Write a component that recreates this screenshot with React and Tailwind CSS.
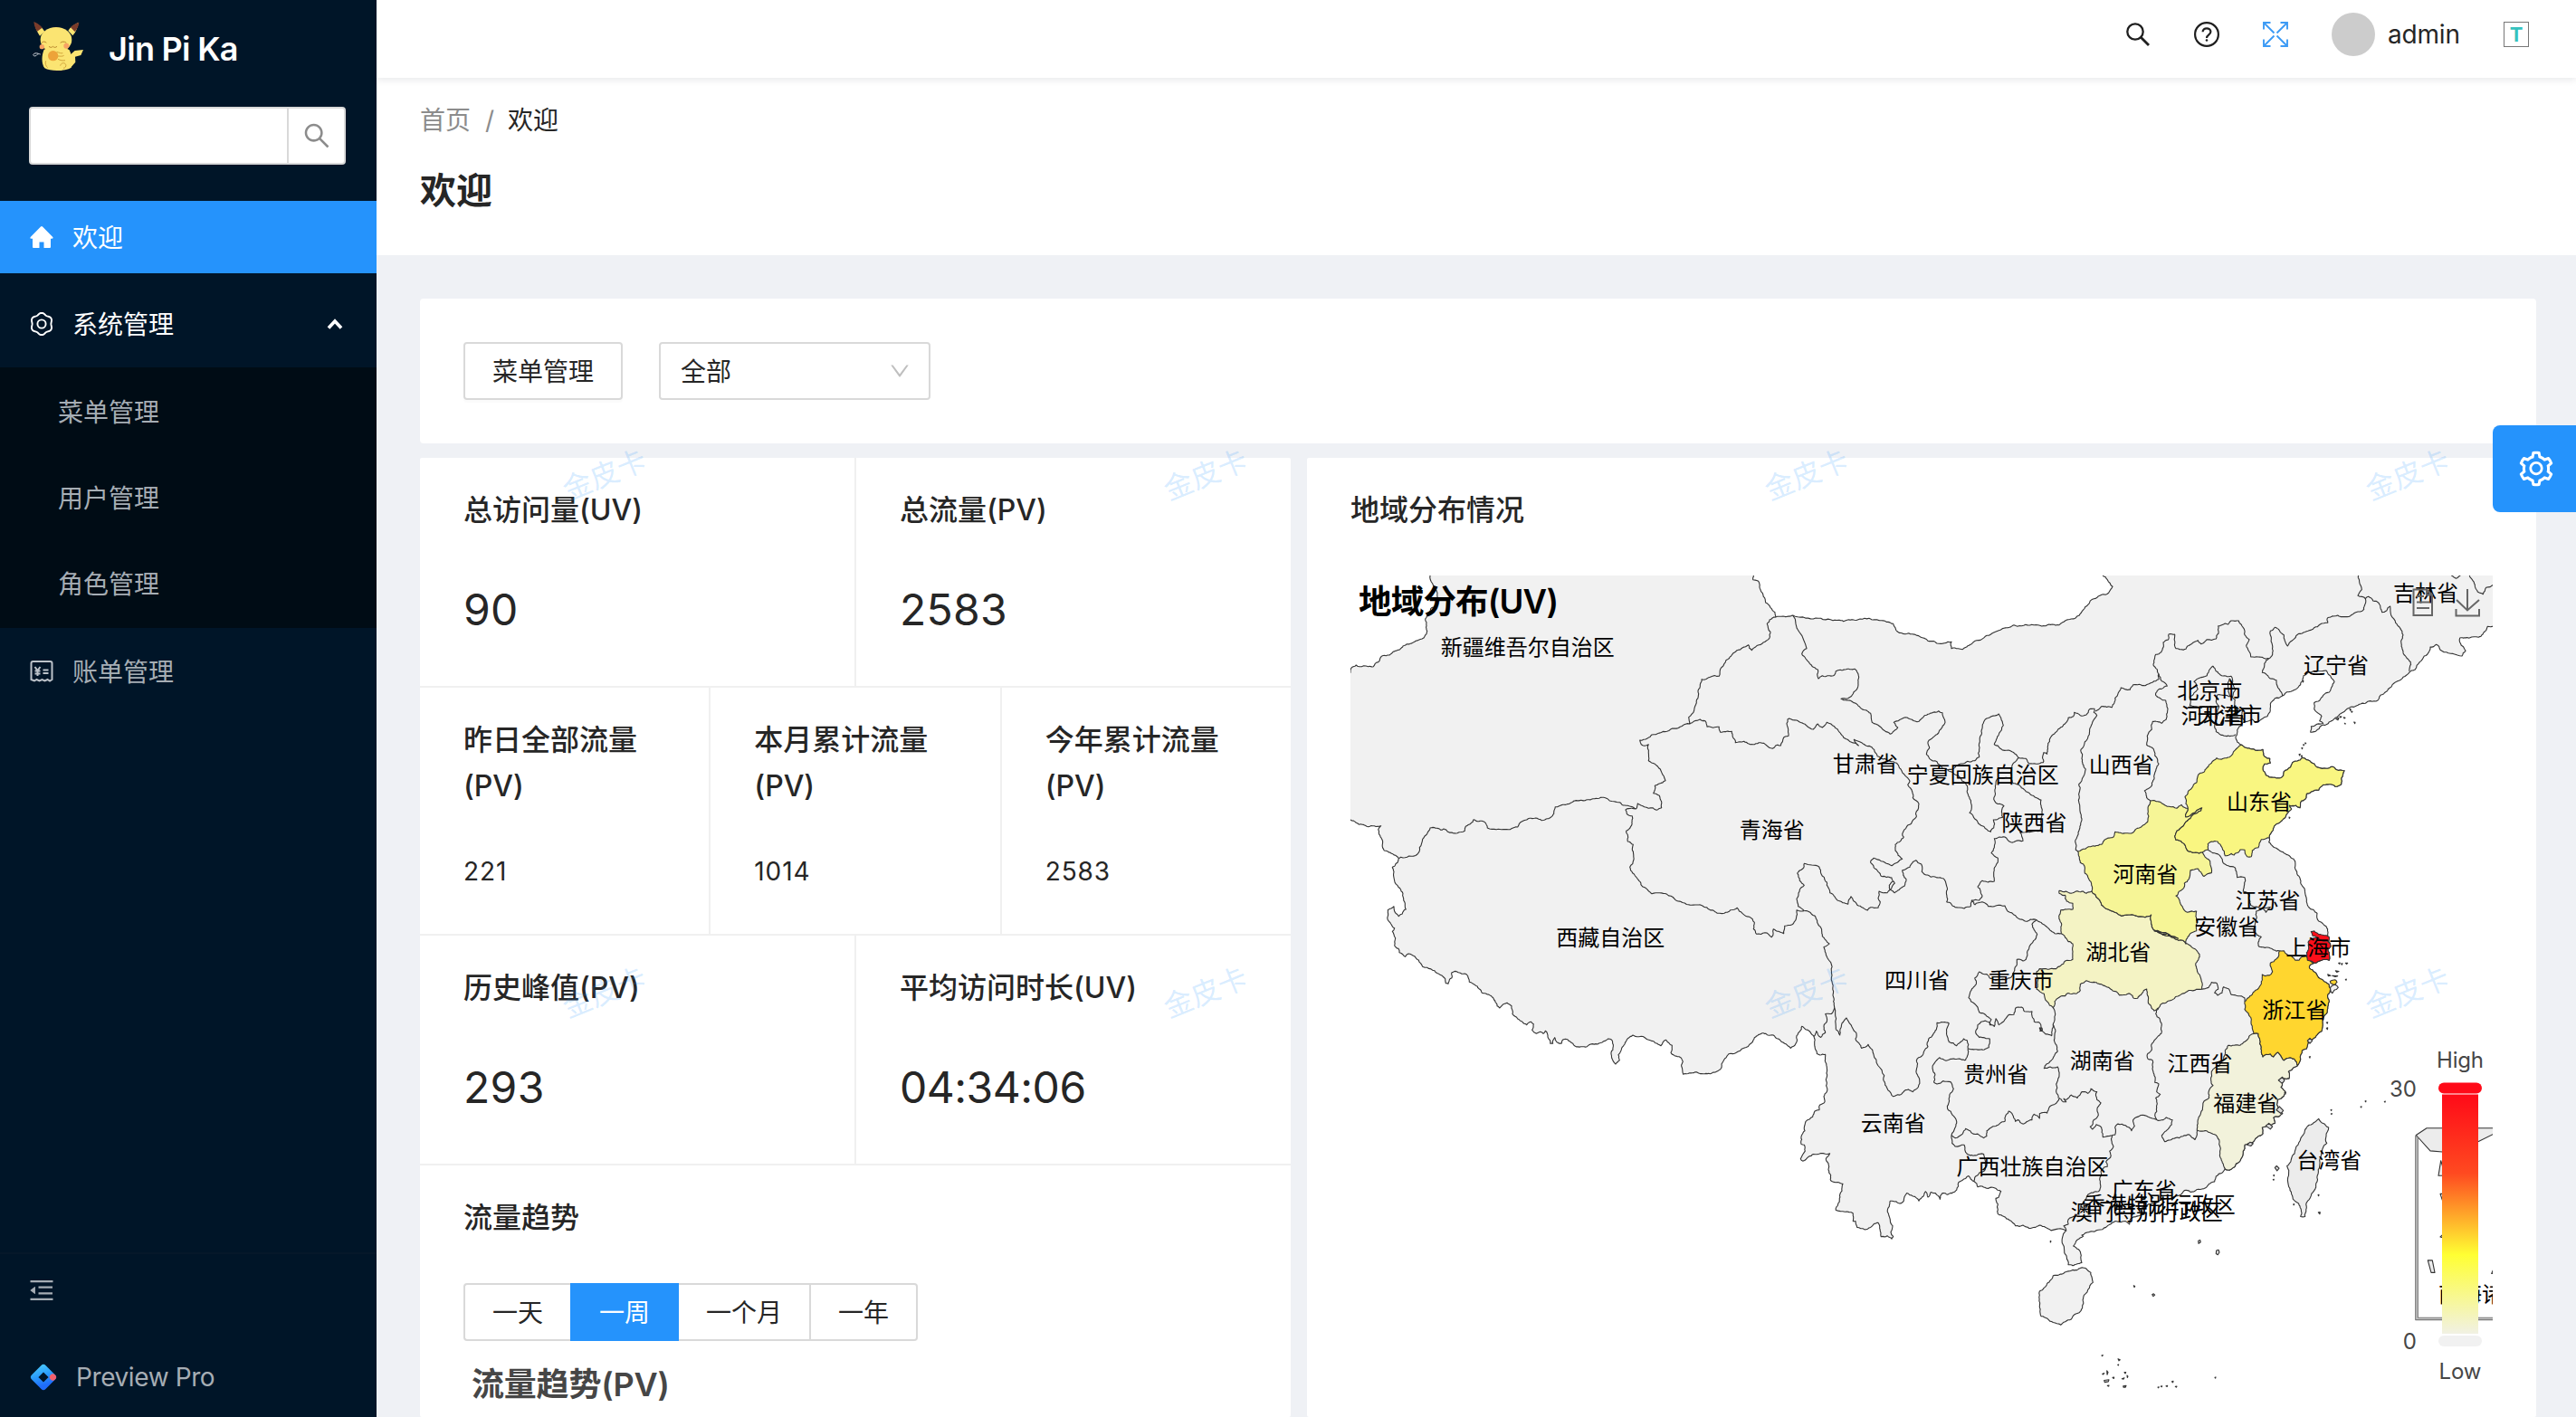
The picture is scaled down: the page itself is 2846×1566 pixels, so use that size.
import React from "react";
import { AiOutlineSearch, AiOutlineSetting, AiOutlineMenuFold, AiOutlineDown } from "react-icons/ai";

/* ---------- map geometry ---------- */

// Each sheet has its own local units: [origin x, origin y, units per px x, units per px y].
const SHEETS = {
  A: [1480, 620, 3, 3],
  B: [1960, 620, 3, 3],
  C: [2380, 460, 3, 3],
  D: [1480, 1000, 3, 3],
  E: [1960, 1000, 3, 2.9037],
  F: [2380, 960, 3, 2.5875],
};

function parse(src) {
  const out = [];
  let sheet = SHEETS.A;
  src.trim().split(/\s+/).forEach((tok) => {
    if (SHEETS[tok]) {
      sheet = SHEETS[tok];
      return;
    }
    const [x, y] = tok.split(",").map(Number);
    out.push([sheet[0] + x / sheet[2], sheet[1] + y / sheet[3]]);
  });
  return out;
}

function hash(a, b) {
  const s = Math.sin(a * 12.9898 + b * 78.233) * 43758.5453;
  return s - Math.floor(s) - 0.5;
}

// Adds small bends between two points; the result is the same in both directions,
// so that neighbours share one border.
function bend(p, q, depth) {
  const dx = q[0] - p[0];
  const dy = q[1] - p[1];
  const len = Math.hypot(dx, dy);
  if (len < 2.6 || depth === 0) return [];
  const flip = p[0] > q[0] || (p[0] === q[0] && p[1] > q[1]) ? -1 : 1;
  const k = hash(Math.round((p[0] + q[0]) * 10), Math.round((p[1] + q[1]) * 10)) * Math.min(len * 0.28, 2.4) * flip;
  const m = [(p[0] + q[0]) / 2 - (dy / len) * k, (p[1] + q[1]) / 2 + (dx / len) * k];
  return [...bend(p, m, depth - 1), m, ...bend(m, q, depth - 1)];
}

function d(src, closed = false, rough = true) {
  const pts = parse(src);
  if (closed) pts.push(pts[0]);
  const all = [pts[0]];
  for (let i = 1; i < pts.length; i++) {
    if (rough) all.push(...bend(pts[i - 1], pts[i], 3));
    all.push(pts[i]);
  }
  return "M" + all.map((p) => p[0].toFixed(1) + " " + p[1].toFixed(1)).join("L") + (closed ? "Z" : "");
}

const MAINLAND = `A 290,20 300,48 308,75 322,100 326,125 320,145 302,158 290,180 284,192 288,215 290,232 282,250 262,262 225,275 200,293 172,307 165,312 142,314 133,330 118,340 112,350 95,350 80,347 65,350 55,345 45,350 38,356 36,370 0,380 0,850 36,858 55,868 75,874 90,880 110,878 130,880 137,878 128,890 130,902 138,918 142,940 148,960 168,967 185,976 196,986 192,1000 182,1012 175,1015 180,1030 180,1050 183,1065 200,1085 210,1103 212,1125 217,1135 220,1155
D 218,15 208,30 196,38 186,28 180,5 160,17 160,50 170,63 182,77 175,88 180,98 185,110 182,135 195,145 198,158 210,165 218,172 228,162 248,170 262,183 275,205 290,208 315,218 340,235 350,245 352,260 360,262 366,245 372,242 372,224 388,221 400,226 420,230 430,256 448,265 462,278 472,292 490,297 505,305 515,318 522,335 530,342 540,332 555,325 570,335 573,362 590,378 605,387 620,398 635,388 643,395 638,415 652,427 665,421 675,427 682,418 690,438 698,460 707,460 713,440 720,455 735,460 742,446 755,446 765,454 780,468 800,470 820,470 832,462 855,462 875,452 890,444 902,448 907,470 900,490 902,508 915,528 928,515 924,497 935,475 945,462 955,443 972,432 985,437 1000,436 1020,446 1040,452 1055,462 1065,467 1072,455 1082,448 1092,458 1102,466 1102,480 1098,490 1110,500 1130,506 1138,520 1133,535 1139,562 1160,557 1178,554 1190,558 1210,560 1245,555 1262,545 1266,528 1290,494 1315,490 1340,475 1365,458 1375,440 1405,425 1420,432 1438,432
E 15,430 35,445 55,460 72,445 75,420 92,390 105,400 120,408 132,422 134,445 142,478 152,482 170,480 175,520 172,560 175,600 165,615 168,632 152,642 150,658 135,662 128,680 105,695 100,715 102,725 92,738 90,768 100,770 103,790 88,815 95,822 115,808 130,800 155,797 185,798 172,815 180,830 180,850 188,868 188,885 210,890 228,895 225,918 218,930 212,960 205,980 235,985 262,990 262,1015 270,1015 275,1035 300,1042 320,1035 330,1025 345,1020 350,1035 355,1065 375,1062 390,1072 395,1065 387,1050 393,1030 385,1010 376,985 385,950 405,952 420,958 430,950 440,925 460,935 480,950 495,935 502,920 510,938 520,922 535,925 550,945 558,925 575,930 590,925 605,915 612,890 635,878 645,870 655,882 662,887 672,895 675,905 690,903 710,910 730,908 752,920 745,938 735,942 742,960 742,992 762,1000 780,1012 800,1030 825,1028 845,1038 865,1035 880,1028 900,1035 918,1045 930,1042 955,1040 968,1046 958,1060 955,1085 962,1110 970,1130 975,1155 990,1158 1005,1152 1020,1148 1018,1125 1008,1105 992,1095 1005,1075 1025,1063 1020,1060 1045,1050 1075,1043 1100,1035 1115,1025 1130,1015 1150,1018 1165,1015 1178,1025 1185,1005 1200,1000 1220,990 1215,975 1235,965 1250,960 1290,945
F 50,945 80,935 100,920 120,925 140,918 165,915 190,897 200,895 205,880 225,870 235,858 250,862 262,855 285,835 300,800 300,790 315,785 330,780 345,765 360,758 358,740 380,735 400,728 395,712 415,708 425,700 412,690 408,660 430,650 435,640 420,625 425,612 412,605 430,600 447,600 445,580 460,570 475,563 485,545 490,520 505,515 510,492 525,488 540,475 555,465 558,440 560,430 575,400 580,380 575,360 585,345 578,330 560,320 545,312 530,295 515,285 515,278 530,270 555,262 580,262 580,240 575,232 585,222 578,205 576,182 570,165 545,150 540,128 512,110 505,95 500,70 485,40 470,5
C 467,1500 462,1468 430,1448 395,1428 380,1412 382,1398 388,1380 410,1350 428,1335 440,1318 455,1302 448,1290 470,1290 483,1298 488,1275 502,1268 505,1252 520,1245 545,1240 560,1222 580,1220 600,1228 620,1220 620,1200 630,1175 605,1172 590,1162 570,1168 545,1165 530,1152 510,1140 490,1133 475,1143 458,1148 450,1165 430,1178 428,1192 415,1200 395,1198 370,1190 360,1170 365,1153 385,1150 383,1135 365,1128 360,1105 335,1108 320,1103 300,1098 290,1090 275,1080 270,1062 275,1040 290,1022 300,1012 325,1005 335,1015 355,1005 375,995 385,975 385,955 400,935 425,927 470,905 485,890 495,860 512,848 540,845 570,843 575,852 597,880 590,895 580,915 560,925 548,943 530,950 530,970 555,995 548,1010 560,1018 520,1028 518,1048 535,1045 555,1025 575,1020 600,1000 620,985 640,970 680,955 710,945 735,945 750,925 775,905 795,885 825,865 845,850 850,845 865,840 880,815 895,795 905,790 915,765 935,757 948,775 975,785 1005,792 1020,795 1032,778 1025,765 1018,760 1013,735 1045,735 1075,733 1100,710 1105,697 1125,695 1160,700 1160,480
B 1080,20 1090,48 1105,62 1122,85 1115,95 1098,112 1060,125 1040,145 1012,180 985,192 965,198 945,212 900,215 875,212 820,215 795,212 780,220 745,230 700,250 655,275 638,285 625,293 610,290 588,290 588,268 565,272 540,273 510,265 485,252 458,242 435,242 410,235 395,208 350,197 315,190 285,192 260,194 230,200 195,197 130,192 62,180 30,183 5,186
A 1443,170 1412,138 1405,118 1395,95 1385,65 1370,62 1370,20`;

const SHANDONG = `C 290,1090 250,1130 207,1133 190,1150 175,1165 165,1180 150,1185 140,1215 125,1232 102,1262 105,1285 112,1300 104,1328 125,1318 158,1298 155,1308 130,1320 105,1345 85,1368 75,1375 68,1392 72,1405 88,1408 105,1430 115,1443 160,1445 178,1438 178,1418 190,1410 210,1410 225,1430 235,1457 255,1450 265,1455 280,1445 285,1437 300,1438 308,1460 322,1460 325,1440 345,1430 355,1403 382,1398 388,1380 410,1350 428,1335 440,1318 455,1302 448,1290 470,1290 483,1298 488,1275 502,1268 505,1252 520,1245 545,1240 560,1222 580,1220 600,1228 620,1220 620,1200 630,1175 605,1172 590,1162 570,1168 545,1165 530,1152 510,1140 490,1133 475,1143 458,1148 450,1165 430,1178 428,1192 415,1200 395,1198 370,1190 360,1170 365,1153 385,1150 383,1135 365,1128 360,1105 335,1108 320,1103 300,1098`;

const HENAN = `B 1007,963 1055,945 1088,938 1095,925 1125,915 1130,898 1165,902 1190,900 1210,885 1238,865 1240,830 1248,795 1285,803 1335,820 1350,808 1365,820
C 112,1300 104,1328 125,1318 158,1298 155,1308 130,1320 105,1345 85,1368 75,1375 68,1392 72,1405 88,1408 105,1430 115,1443 160,1445 165,1455 185,1475 190,1500
F 190,12 165,22 155,10 145,0 120,5 115,30 100,42 98,55 72,78 85,95 95,112 110,125 140,122 142,150 140,178 120,185 105,215 95,205 80,205 65,198 55,195 45,185 20,185 0,178
E 1340,108 1310,95 1285,88 1258,80 1250,60 1250,32 1230,40 1200,35 1150,35 1120,20 1095,8 1085,0
B 1075,1120 1053,1095 1052,1075 1030,1035 1025,1005 1015,1000`;

const HUBEI = `B 1053,1095 1035,1102 1025,1095 990,1100 945,1093 945,1102 965,1108 970,1128 990,1135 990,1155 950,1157 947,1190 952,1200 952,1235
E 965,105 975,118 990,125 990,150 990,175 965,180 950,195 935,205 895,205 880,205 870,215 875,240 870,270 895,285 905,310 925,330 930,310 945,297 965,292 975,283 1000,285 1015,275 1015,255 1035,243 1060,248 1090,258 1115,270 1145,290 1180,285 1192,300 1205,300 1225,275 1235,270 1240,310 1260,340 1275,330
F 20,390 60,375 85,362 115,348 140,345 158,345 155,315 140,285 138,270 150,245 130,228 110,215 95,205 80,205 65,198 55,195 45,185 20,185 0,178
E 1340,108 1310,95 1285,88 1258,80 1250,60 1250,32 1230,40 1200,35 1150,35 1120,20 1095,8 1085,0
B 1075,1120`;

const ZHEJIANG = `F 415,235 405,258 385,270 392,295 382,305 358,303 355,330 335,348 325,360 300,380 300,402 320,425 325,450 330,472 345,472 350,490 355,510 360,538 385,530 395,538 410,525 420,535 430,548 450,540 465,545 475,563 485,545 490,520 505,515 510,492 525,488 540,475 555,465 558,440 560,430 575,400 580,380 575,360 585,345 578,330 560,320 545,312 530,295 515,285 515,278 530,270 515,260 505,250 490,252 480,262 468,262 455,250 440,245 430,235`;

const SHANGHAI = [
  `F 530,270 508,262 505,240 512,228 510,210 525,200 535,198 550,200 575,205 585,222 575,232 580,240 580,262 555,262`,
  `F 520,180 530,178 545,188 580,195 578,208 550,203 525,192`,
];

const FUJIAN = `F 330,472 320,475 300,495 285,505 265,505 245,505 235,520 230,545 215,565 190,580 188,605 195,620 180,640 182,655 165,665 160,690 148,710 142,748 165,750 185,755 205,762 215,775 220,800 222,830 235,858 250,862 262,855 285,835 300,800 300,790 315,785 330,780 345,765 360,758 358,740 380,735 400,728 395,712 415,708 425,700 412,690 408,660 430,650 435,640 420,625 425,612 412,605 430,600 447,600 445,580 460,570 475,563 465,545 450,540 430,548 420,535 410,525 395,538 385,530 360,538 355,510 350,490 345,472`;

const HAINAN = `E 1030,1165 1050,1180 1057,1212 1040,1235 1025,1260 1022,1290 1015,1305 995,1315 985,1330 965,1338 950,1348 925,1340 885,1320 880,1290 880,1240 905,1215 925,1190 945,1187 980,1175 1000,1172`;
const TAIWAN = `F 545,715 560,728 578,740 570,765 572,785 555,810 548,850 540,895 520,935 505,955 500,995 485,995 483,965 460,945 445,905 440,850 465,815 490,765 505,740 525,730`;

const BORDERS = [
  `A 1445,186 1425,195 1417,208 1428,235 1425,255 1410,268 1390,278 1366,296 1355,278 1335,288 1305,305 1280,330 1262,358 1258,382 1200,392 1195,410 1188,430 1183,470 1175,495 1157,518 1160,540 1110,555 1085,565 1035,576 1020,588 995,594 1000,608 1010,613 1024,608 1024,662 1045,673 1063,690 1072,710 1080,728 1060,738 1045,745 1040,770 1060,778 1067,818 1050,826 1038,818 1010,815 988,804 982,822`,
  `A 968,820 982,822 945,810 910,797 895,795 875,784 835,790 800,793 770,800 740,808 715,815 710,838 700,850 670,860 650,852 620,858 595,872 590,882 565,890 520,890 490,885 480,865 445,857 435,870 418,880 415,895 390,902 372,900 345,888 335,892 300,885 290,905 275,922 265,950 258,972 230,978 203,982 196,986`,
  `A 968,820 948,825 952,838 970,845 965,880 950,895 955,930 973,940 970,955 975,990 962,1015 985,1050 1005,1080 1035,1103 1085,1105 1110,1120 1145,1135 1190,1140 1225,1155 1245,1163 1275,1168 1318,1150 1335,1168 1358,1180 1375,1198 1372,1220 1382,1237 1410,1232 1432,1247 1438,1220 1455,1228 1472,1235 1475,1210 B 60,1205 72,1190 75,1165 75,1157 100,1160`,
  `B 62,180 108,290 92,308 118,340 145,360 147,390 160,380 170,383 200,378 205,365 235,360 268,358 280,380 277,420 262,440 245,455 222,457 260,467 290,490 320,505 325,535 350,548 385,574 410,552 397,535 435,518 480,532 510,508 545,497 558,503 565,540 545,570 510,600 515,620 505,640 515,655 540,665 558,688 575,692`,
  `B 575,692 620,672 665,662 680,650 682,600 688,560 700,525 720,515 745,507 752,520 760,545 745,575 730,608 750,622 780,628 810,652 835,655 845,672`,
  `B 575,692 610,710 640,745 645,780 655,810 648,835 665,855 690,878 718,898 728,885 727,858 745,853 758,850 755,825 762,812 735,802 728,790 735,740 740,722 785,720 790,735 820,752 850,775 870,785 885,792 888,830 885,870 882,895`,
  `B 812,652 800,665 788,685 788,720`,
  `B 845,672 892,668 893,635 905,640 908,605 925,575 955,550 975,520 992,515 995,502 1015,512 1035,510 1045,492 1062,490 1060,502 1070,512 1055,535 1045,575 1030,600 1017,625 1020,655 1033,690 1025,715 1010,740 1012,785 1018,850 1012,890 998,930 1000,958 1007,963`,
  `B 1065,498 1085,482 1120,485 1130,455 1150,420 1180,427 1190,410 1230,413 1255,402 1275,392 1275,375 1257,345 1265,310 1283,302 1290,270 1305,262 1308,243 1328,243 1332,290 1365,292 C 110,762 145,743 155,755 175,740 205,738 213,720 212,695 235,687 245,690 255,678 280,678 298,705 300,725 315,740 305,760 320,798 345,798 380,803`,
  `B 1275,375 1285,398 1303,415 1270,430 1265,445 1298,462 1305,490 1300,525 1285,538 1255,532 1252,558 1237,580 1235,610 1252,618 1262,645 1275,672 1260,710 1252,745 1228,762 1240,790 1248,795`,
  `C 178,1438 200,1448 220,1460 228,1480 245,1490 268,1497 F 275,25 300,25 295,65 315,75 320,105 345,110 370,125 385,110 360,112 338,122 340,140 335,150 330,180 355,195 345,220 375,225 395,232 415,235`,
  `F 158,345 180,340 190,325 208,328 212,345 200,355 210,362 225,355 230,338 248,345 255,360 300,370 300,380`,
  `F 142,748 135,775 115,760 95,765 70,770 40,780 E 1295,760 1285,740 1300,725 1318,705 1320,690 1300,682 1290,690 1268,690`,
  `E 1275,330 1265,350 1278,365 1285,405 1265,430 1250,450 1252,465 1238,478 1240,495 1255,500 1258,540 1262,570 1275,575 1268,600 1280,608 1265,620 1268,650 1262,675 1268,690`,
  `E 1268,690 1240,680 1215,675 1190,690 1195,710 1185,725 1165,708 1140,703 1130,715 1130,738 1120,740 1090,745 1085,715 1068,705 1055,720 1048,712 1060,690 1075,675 1072,650 1083,635 1070,625 1070,600 1050,590 1040,605 1020,600 1005,620 985,610 970,625 960,622 968,632 958,632 945,620`,
  `E 1120,740 1118,755 1125,775 1112,790 1115,810 1100,825 1105,840 1085,850 1080,875 1082,900 1075,920 1040,930 1020,960 1000,1000 975,1010 975,1025 960,1030 968,1046`,
  `E 925,330 932,350 925,385 932,400 932,445 940,470 918,500 895,525 915,520 940,520 945,545 935,575 935,600 942,620`,
  `E 945,620 930,640 912,650 905,668 880,670 880,685 862,672 855,690 840,695 825,703 810,690 800,695 790,672 778,662 768,675 765,695 735,710 705,725 705,742 695,748 675,735 660,735 650,725 635,718 625,735 600,748 588,740`,
  `E 588,740 600,715 605,695 575,655 580,620 595,590 585,568 560,565 540,575 530,570 532,540 525,525 530,510 548,490 570,500 600,495 635,498 643,480 643,462`,
  `E 588,740 590,765 600,775 630,770 640,800 660,805 695,800 700,830 700,850 680,860 665,875 662,887`,
  `E 643,462 680,465 712,458 715,430 680,425 668,405 675,385 700,372 720,385`,
  `E 643,462 640,435 628,430 605,452 580,440 572,408 580,380 540,378 538,400 512,430 510,455 490,485 472,500 472,540 482,560 478,585 460,600 445,592 415,610 395,615 378,595 362,560 365,548 330,480 312,448 290,460 270,430 272,410 255,385 240,363 225,380 220,410 218,418 205,400`,
  `E 100,19 115,22 135,35 150,68 160,100 183,125 165,135 180,175 188,185 190,240 195,290 200,330 205,400`,
  `E 200,330 190,350 170,350 175,375 165,390 170,410 155,425 140,405 132,422`,
  `B 100,1160 80,1145 75,1120 85,1090 100,1075 85,1060 77,1035 95,1020 100,1003 125,1008 150,1015 155,1035 175,1065 185,1100 210,1125 245,1138 255,1112 275,1140 295,1150 310,1158 320,1148 345,1150 352,1130 345,1118 348,1095 375,1100 385,1090`,
  `A 1160,540 1195,525 1212,530 1218,550 1258,550 1262,568 1300,565 1312,602 1340,598 1375,608 1395,602 1435,622 1445,612 1462,612 1472,585 1488,580 1485,525 B 50,522 75,528 110,548 130,558 145,540 160,552 175,535 200,548 225,578 255,600 280,612 265,592 290,602 325,618 335,635 355,655 380,662 400,668 420,690 435,712 450,730 443,742 458,765 460,785 480,805 472,830 472,848 455,870 440,880 425,905 430,915 402,940 402,960 425,988 408,1000 390,1010 355,995 330,985 320,1000 345,1030 355,1045 390,1050 400,1068 385,1090 382,1075 395,1062`,
  `B 385,1090 400,1100 415,1090 432,1078 438,1055 425,1025 450,1015 470,992 488,1005 490,1030 520,1048 560,1052 572,1078 575,1120 572,1130 600,1148 630,1152 652,1145 655,1125 665,1140`,
  `B 655,1125 680,1125 690,1110 685,1095 675,1080 690,1060 730,1062 728,1040 735,1010 742,985 720,968 730,950 730,920 765,915 785,932 825,928 815,900 825,900 882,895`,
  `B 665,1140 690,1130 710,1145 765,1143 775,1162 800,1175 835,1195 850,1188 870,1190 900,1210 930,1235 952,1235`,
  `E 870,48 855,62 872,95 860,115 845,140 835,175 825,180 805,175 795,215 780,235 745,240 715,235 705,222 680,215 665,235 670,255 650,280 645,298 665,318 680,345 700,352 720,368 715,385 720,385 730,390 735,365 745,385 765,368 780,352 795,352 800,332 820,328 830,342 855,342 862,375 880,378 885,405 880,395 900,415 920,420 922,398 925,385`,
  `C 380,803 365,820 358,850 385,870 405,875 410,900 425,927`,
  `C 380,803 392,790 388,740 385,712 400,700 415,710 430,725 442,762 470,728 510,712 550,690 575,685 575,668 608,660 650,662 668,650 695,640 700,605`,
  `C 675,520 680,550 688,575 675,595 700,605 710,598 725,612 745,620 755,650 770,645 782,630 785,660 800,685 825,725 818,745 825,780 850,815 845,845`,
  `C 1045,528 1060,550 1072,582 1090,590 1100,568 1125,558`,
  `C 985,528 1000,538 1015,528`,
  `C 195,828 205,845 220,858 255,862 258,885 270,905 260,930 235,925 208,925 205,945 215,962 190,965 150,965 118,960 118,930 145,905 132,880 150,868 175,860 185,838 195,828`,
  `C 258,885 250,870 245,900 250,925 268,940 265,965 295,975 290,990 300,1012`,
  `C 215,962 210,990 200,1030 205,1045 235,1060 255,1060 270,1055`,
  `E 880,395 888,395 888,405 880,405`,
];

const ISLANDS = [
  `E 916,1078 918,1080 916,1083`, `E 1192,1222 1196,1224 1194,1227`, `E 1253,1251 1258,1248 1262,1252 1257,1256`,
  `F 146,1064 152,1062 154,1068 147,1072`, `F 206,1092 213,1090 216,1097 211,1104 205,1101`,
  `F 400,855 406,850 414,857 407,864`, `F 395,877 398,876 397,879`, `F 394,889 397,888 396,891`,
  `F 461,960 464,959 463,962`, `F 543,933 546,932 545,936`, `F 544,983 550,982 549,988`,
  `F 585,690 588,689 587,692`, `F 586,701 589,700 588,703`, `F 684,681 687,680 686,683`, `F 699,665 702,664 701,667`, `F 763,666 766,665 765,668`,
  `F 611,270 616,269 614,273`, `F 620,272 624,271 622,275`, `F 634,270 641,270 638,273`, `F 634,317 637,316 636,319`,
  `F 601,292 612,294 605,296`, `F 575,302 585,306 577,307`, `F 590,306 608,307 600,309`,
  `F 571,440 575,439 574,443`, `F 571,456 575,455 574,460`, `F 514,538 517,537 516,541`, `F 432,640 436,639 435,645`,
  `F 308,790 318,782 328,786 320,793`, `F 370,735 380,728 392,738 385,745`, `F 405,690 415,680 428,692 420,700`, `F 412,605 425,596 432,606 424,614`,
  `F 508,492 516,485 524,492 516,500`,
  `C 648,970 652,972 650,976`, `C 653,978 657,979 655,982`, `C 615,995 621,996 617,999`, `C 628,998 633,1000 630,1002`, `C 602,1003 612,1000 609,1007`, `C 631,1018 634,1019 633,1021`, `C 662,1014 666,1015 665,1019`,
  `C 500,1083 503,1084 501,1086`, `C 494,1088 497,1089 495,1092`, `C 489,1099 492,1100 490,1103`, `C 480,1121 484,1120 482,1125`, `C 487,1126 490,1125 490,1131`, `C 492,877 495,878 493,882`, `C 447,1329 450,1331 448,1333`,
  `E 1086,1446 1090,1445 1088,1448`, `E 1140,1457 1147,1460 1143,1463`, `E 1139,1476 1142,1475 1141,1478`, `E 1103,1495 1107,1500 1104,1508`, `E 1088,1506 1094,1503 1091,1507`, `E 1161,1500 1166,1500 1164,1504`, `E 1170,1510 1173,1513 1171,1517`, `E 1153,1521 1161,1518 1158,1522`, `E 1122,1517 1127,1516 1126,1520`, `E 1094,1526 1110,1524 1108,1530 1096,1532`, `E 1105,1543 1110,1542 1109,1545`, `E 1157,1544 1167,1543 1165,1548 1158,1548`,
  `E 1272,1548 1276,1547 1274,1550`, `E 1282,1545 1286,1544 1285,1547`, `E 1299,1544 1304,1543 1303,1546`, `E 1318,1530 1323,1528 1322,1533`, `E 1330,1546 1335,1545 1333,1548`,
  `F 201,1455 204,1454 203,1457`,
];

const LABELS = [
  ["新疆维吾尔自治区", 1687.7, 714], ["青海省", 1957.8, 916], ["西藏自治区", 1779.2, 1035], ["甘肃省", 2060.8, 843.3],
  ["宁夏回族自治区", 2190.8, 855.3], ["陕西省", 2247.5, 908.3], ["山西省", 2343.7, 844], ["河南省", 2370.2, 965.3],
  ["北京市", 2441.3, 762.3], ["河北省", 2445.8, 790.7], ["天津市", 2463.3, 789.3], ["辽宁省", 2581, 734],
  ["吉林省", 2680, 654.5], ["山东省", 2496, 885], ["江苏省", 2505.5, 994], ["安徽省", 2460.3, 1023.8],
  ["上海市", 2561.3, 1046.6], ["浙江省", 2535.3, 1115.4], ["江西省", 2430.5, 1174.9], ["福建省", 2481.3, 1218.2],
  ["台湾省", 2573.3, 1281.9], ["湖北省", 2340.3, 1051], ["四川省", 2118, 1082], ["重庆市", 2232.7, 1082],
  ["湖南省", 2322.7, 1171.5], ["贵州省", 2205.3, 1186], ["云南省", 2091.8, 1240.7], ["广西壮族自治区", 2245.5, 1288.6],
  ["广东省", 2368.7, 1314], ["香港特别行政区", 2385.8, 1330], ["澳门特别行政区", 2371.8, 1338], ["南海诸岛", 2742, 1429],
];

function RegionMap() {
  return (
    <svg className="block h-[930px] w-[1262px]" viewBox="1492 636 1262 930" role="img" aria-label="地域分布">
      <defs>
        <linearGradient id="heat" x1="0" y1="0" x2="0" y2="1">
          <stop offset="0" stopColor="#ff0a18" />
          <stop offset="0.33" stopColor="#ff4a20" />
          <stop offset="0.67" stopColor="#ffff33" />
          <stop offset="1" stopColor="#f1f1e4" />
        </linearGradient>
      </defs>
      <g stroke="#333" strokeWidth="1.100" strokeLinejoin="round">
        <path d={d(MAINLAND, true)} fill="#f1f1f1" />
        <path d={d(HAINAN, true)} fill="#f1f1f1" />
        <path d={d(TAIWAN, true)} fill="#ececec" />
        {BORDERS.map((b, i) => (
          <path key={i} d={d(b)} fill="none" />
        ))}
        <path d={d(HUBEI, true)} fill="#f4f3c4" />
        <path d={d(HENAN, true)} fill="#f6f596" />
        <path d={d(SHANDONG, true)} fill="#f9f681" />
        <path d={d(FUJIAN, true)} fill="#f2f2db" />
        <path d={d(ZHEJIANG, true)} fill="#ffd62f" />
        {SHANGHAI.map((s, i) => (
          <path key={i} d={d(s, true)} fill="#fd0f1a" />
        ))}
        <path d={d("F 583,322 600,318 606,325 600,332 585,328", true)} fill="#ffd62f" />
        <path d={d("F 585,338 600,332 610,340 596,348 590,356 584,346", true)} fill="#f1f1f1" />
        {ISLANDS.map((s, i) => (
          <path key={i} d={d(s, true, false)} fill="#ddd" />
        ))}
        <path d={d("F 868,762 903,742 1140,742 1122,760 1075,780 1040,800 955,810 915,807", true, false)} fill="#ececec" />
        <path d={d("F 866,764 874,768 874,1284 1140,1284 1140,1290 866,1290", true, false)} fill="#c4c4c4" stroke="#777" />
        <path d={d("F 950,835 942,878 965,878", true, false)} fill="#ececec" />
        <path d={d("F 948,930 962,930 958,955", true, false)} fill="#ececec" />
        <path d={d("F 948,1053 955,1048 960,1056", true, false)} fill="#ececec" />
        <path d={d("F 907,1120 922,1120 930,1155 918,1155", true, false)} fill="#ececec" />
        <path d={d("F 1118,1158 1124,1146 1130,1158", true, false)} fill="#888" />
      </g>
      <g className="font-['Noto_Sans_CJK_SC',sans-serif]" fontSize="24" fill="#000" textAnchor="middle">
        {LABELS.map(([t, x, y]) => (
          <text key={t} x={x} y={y + 9.5}>{t}</text>
        ))}
      </g>
      <text className="font-['Inter','Noto_Sans_CJK_SC',sans-serif] font-semibold" x="1501" y="678" fontSize="36.500" fill="#000" textLength="221">
        地域分布(UV)
      </text>
      <g fill="none" stroke="#666" strokeWidth="2">
        <path d="M2666.5 651.5h14.5l6 6v22.5h-20.500zM2681 651.5v6h6M2670 659h8M2670 665.500h14M2670 672h14" />
        <path d="M2726 651v23.500M2714 663l12 11.500L2739 663M2713.500 673v7.500h25.500V673" />
      </g>
      <rect x="2698" y="1209.500" width="40" height="264.500" fill="url(#heat)" />
      <rect x="2694" y="1196.500" width="48" height="12" rx="6" fill="#ff0a18" />
      <rect x="2694" y="1476" width="48" height="12" rx="6" fill="#f1f1f1" />
      <g className="font-['Inter',sans-serif]" fontSize="24" fill="#464646">
        <text x="2718" y="1180" textAnchor="middle" textLength="52">High</text>
        <text x="2718" y="1524" textAnchor="middle" textLength="47">Low</text>
        <text x="2670" y="1211.500" textAnchor="end">30</text>
        <text x="2670" y="1491" textAnchor="end">0</text>
      </g>
    </svg>
  );
}

/* ---------- small drawings ---------- */

function Logo() {
  return (
    <svg className="h-16 w-16" viewBox="0 0 192 192" fill="#fbe472">
      <path d="M136 116l16-14 28-3-8 18-19 5 1 18-12 14-14-2z" />
      <path d="M18 8c14 7 28 18 34 31l-16 14C26 38 20 22 18 8zM164 8c-14 7-28 16-34 28l15 16c12-13 17-30 19-44z" />
      <path d="M16 6c12 5 20 10 28 20l-17 12C20 28 17 16 16 6zM166 8c-12 3-22 9-28 17l14 14c9-10 13-20 14-31z" fill="#7a3b2a" />
      <ellipse cx="90" cy="66" rx="52" ry="42" />
      <path d="M50 98c24-12 66-12 84 2 8 18 14 42 6 58-18 12-68 14-88 2-12-16-10-44-2-62z" />
      <path d="M42 76c4-5 12-5 16 0M104 76c6-5 14-5 20 0M66 88c4 4 10 4 13 0 4 4 10 4 14 0" fill="none" stroke="#b9882e" strokeWidth="3" />
      <circle cx="43" cy="89" r="8" fill="#f7a264" />
      <circle cx="124" cy="86" r="9" fill="#f7a264" />
      <circle cx="80" cy="119" r="17" fill="#eda339" />
      <path d="M92 106c8 2 14 6 20 4M96 120c8 0 14 2 20-2M96 130c8 4 16 6 24 4M56 136c-3 8 0 18 6 22M104 152c2-10 14-12 18-4 2 6-2 12-8 12" fill="none" stroke="#d2a53c" strokeWidth="3" />
      <path d="M32 112c-8-3-16-2-18 4 2 6 10 4 12 0 4-4 8-4 12-2" fill="none" stroke="#cfd3da" strokeWidth="3" />
    </svg>
  );
}

function HomeIcon() {
  return (
    <svg className="h-[26px] w-[26px]" viewBox="0 0 26 26" fill="#fff">
      <path d="M12 1.500a1.500 1.500 0 0 1 2 0L25.300 13c.6.8.2 1.700-.8 1.700H23V24a1 1 0 0 1-1 1h-6.500v-6.500h-5V25H4a1 1 0 0 1-1-1v-9.300H1.500c-1 0-1.400-.9-.8-1.700z" />
    </svg>
  );
}

function FlowerGear() {
  let path = "";
  for (let i = 0; i <= 72; i++) {
    const t = (i / 72) * Math.PI * 2;
    const r = 11.3 + 0.9 * Math.cos(6 * (t - Math.PI / 2));
    path += (i ? "L" : "M") + (13 + r * Math.cos(t)).toFixed(2) + " " + (13 + r * Math.sin(t)).toFixed(2);
  }
  return (
    <svg className="h-[26px] w-[26px]" viewBox="0 0 26 26" fill="none" stroke="#fff" strokeWidth="1.900">
      <path d={path + "Z"} />
      <circle cx="13" cy="13" r="4.600" />
    </svg>
  );
}

function BillIcon() {
  return (
    <svg className="h-[26px] w-[26px]" viewBox="0 0 26 26" fill="none" stroke="#bcc2c9" strokeWidth="2">
      <path d="M1.500 22V4q0-2 2-2h19q2 0 2 2v18l-2.500 1.500-2.500-1.500-3 1.500-3-1.500-3 1.500-3-1.500-2.500 1.500z" />
      <path d="M5.500 8l3 4 3-4M8.500 12v6M5.500 12.500h6M5.500 15.500h6M14.500 11.500h6M14.500 15h6" />
    </svg>
  );
}

function ProIcon() {
  return (
    <svg className="h-[30px] w-[30px]" viewBox="0 0 30 30" fill="none" strokeWidth="7" strokeLinejoin="round" strokeLinecap="round">
      <defs>
        <linearGradient id="pro" x1="0" y1="0" x2="0.300" y2="1">
          <stop offset="0" stopColor="#45c2fb" />
          <stop offset="0.500" stopColor="#2a9bfc" />
          <stop offset="1" stopColor="#1f6cfb" />
        </linearGradient>
      </defs>
      <path d="M15 4.500L25.500 15 15 25.500 4.500 15z" stroke="url(#pro)" />
      <path d="M25.400 14.900l.1.100-.1.100" stroke="#f4606c" />
    </svg>
  );
}

function FullscreenIcon() {
  return (
    <svg className="h-7 w-7" viewBox="0 0 28 28" fill="none" stroke="#3d9bf5" strokeWidth="1.900">
      <path d="M1 8.500V1h7.500M19.500 1H27v7.500M27 19.500V27h-7.500M8.500 27H1v-7.500M1 1l11.500 11.500M27 1L15.500 12.500M27 27L15.500 15.500M1 27l11.500-11.500" />
    </svg>
  );
}

function HelpIcon() {
  return (
    <svg className="h-7 w-7" viewBox="0 0 28 28" fill="none" stroke="#1f1f1f" strokeWidth="2.200">
      <circle cx="14" cy="14" r="12.900" />
      <path d="M9.600 11.300c0-2.300 2-4 4.400-4s4.400 1.700 4.400 3.800c0 3.500-4.400 3-4.400 7" />
      <circle cx="14" cy="20.500" r="1.300" fill="#1f1f1f" stroke="none" />
    </svg>
  );
}

function SearchIcon() {
  return (
    <svg className="h-7 w-7" viewBox="0 0 28 28" fill="none" stroke="#1f1f1f" strokeWidth="2.300">
      <circle cx="11" cy="11" r="8.700" />
      <path d="M17 17l9 9" strokeWidth="2.800" />
    </svg>
  );
}

/* ---------- page parts ---------- */

function Sidebar() {
  return (
    <aside className="flex w-[416px] shrink-0 flex-col bg-[#001528] text-[28px] text-[#a6adb4]">
      <div className="flex h-[118px] items-start pl-8 pt-[22px]">
        <Logo />
        <span className="ml-6 mt-[7px] text-[36px] leading-[50px] font-semibold tracking-[-0.7px] text-white">Jin Pi Ka</span>
      </div>
      <div className="mx-8 flex h-16 w-[350px] rounded-[4px] border-2 border-[#d9d9d9] bg-white">
        <div className="flex-1" />
        <div className="flex w-[63px] items-center justify-center border-l-2 border-[#d9d9d9]">
          <AiOutlineSearch className="h-[34px] w-[34px] text-[#8c8c8c]" />
        </div>
      </div>
      <nav className="mt-10 flex flex-col">
        <div className="flex h-20 items-center bg-[#2593fc] pl-[33px] text-white">
          <HomeIcon />
          <span className="ml-[21px] pt-[2px]">欢迎</span>
        </div>
        <div className="mt-4 mb-2 flex h-20 items-center pr-[37px] pl-[33px] text-white">
          <FlowerGear />
          <span className="ml-[21px] flex-1 pt-[2px]">系统管理</span>
          <svg className="h-3 w-[18px]" viewBox="0 0 18 12" fill="none" stroke="#fff" strokeWidth="3.600">
            <path d="M2 10.500l7-7.500 7 7.500" />
          </svg>
        </div>
        <div className="flex h-[288px] flex-col justify-around bg-[#000c15] pt-[2px] pl-16">
          <span>菜单管理</span>
          <span>用户管理</span>
          <span>角色管理</span>
        </div>
        <div className="mt-2 flex h-20 items-center pl-[33px]">
          <BillIcon />
          <span className="ml-[21px] pt-[2px]">账单管理</span>
        </div>
      </nav>
      <div className="mt-auto flex h-[182px] flex-col border-t-2 border-[#06182a]">
        <div className="flex h-20 items-center pl-[30px]">
          <AiOutlineMenuFold className="h-8 w-8" />
        </div>
        <div className="mt-4 flex h-20 items-center pl-[33px]">
          <ProIcon />
          <span className="ml-[21px] tracking-[-0.4px]">Preview Pro</span>
        </div>
      </div>
    </aside>
  );
}

function Header() {
  return (
    <header className="relative flex h-[86px] items-center justify-end bg-white pr-[52px] pb-[10px] shadow-[0_2px_8px_rgba(0,21,41,0.1)]">
      <SearchIcon />
      <span className="ml-12"><HelpIcon /></span>
      <span className="ml-12"><FullscreenIcon /></span>
      <span className="ml-12 h-12 w-12 rounded-full bg-[#ccc]" />
      <span className="ml-[14px] w-[81px] text-[28px] leading-none tracking-[-0.2px]">admin</span>
      <span className="ml-[47px] flex h-7 w-7 items-center justify-center border border-[#777] text-[22px] leading-none font-bold text-[#36c2be]">T</span>
    </header>
  );
}

function Stat({ title, value, small, tight }) {
  return (
    <div className="flex-1 border-r-2 border-[#f0f0f0] px-12 pt-[33px] last:border-r-0">
      <div className="text-[32px] leading-[50.500px] font-medium">{title}</div>
      {small ? (
        <div className="mt-[46px] text-[28px] leading-[46px] tracking-[0.9px]">{value}</div>
      ) : (
        <div className={tight ? "mt-[47px] text-[48px] leading-[74px] tracking-[-0.5px]" : "mt-[47px] text-[48px] leading-[74px] tracking-[0.3px]"}>{value}</div>
      )}
    </div>
  );
}

function StatsCard() {
  return (
    <section className="flex w-[962px] shrink-0 flex-col rounded-[2px] bg-white">
      <div className="flex h-[254px] border-b-2 border-[#f0f0f0]">
        <Stat title="总访问量(UV)" value="90" />
        <Stat title="总流量(PV)" value="2583" />
      </div>
      <div className="flex h-[274px] border-b-2 border-[#f0f0f0]">
        <Stat title={<>昨日全部流量<br />(PV)</>} value="221" small />
        <Stat title={<>本月累计流量<br />(PV)</>} value="1014" small />
        <Stat title={<>今年累计流量<br />(PV)</>} value="2583" small />
      </div>
      <div className="flex h-[254px] border-b-2 border-[#f0f0f0]">
        <Stat title="历史峰值(PV)" value="293" />
        <Stat title="平均访问时长(UV)" value="04:34:06" tight />
      </div>
      <div className="px-12 pt-[33px]">
        <div className="text-[32px] leading-[50px] font-medium">流量趋势</div>
        <div className="mt-[47px] flex h-16 w-[502px] text-[28px] leading-[62px]">
          <span className="w-[118px] rounded-l-[4px] border-2 border-r-0 border-[#d9d9d9] text-center">一天</span>
          <span className="w-[120px] border-2 border-[#2593fc] bg-[#2593fc] text-center text-white">一周</span>
          <span className="w-[146px] border-2 border-l-0 border-[#d9d9d9] text-center">一个月</span>
          <span className="w-[118px] rounded-r-[4px] border-2 border-l-0 border-[#d9d9d9] text-center">一年</span>
        </div>
        <div className="mt-[22px] pl-[9px] text-[36px] leading-[52px] font-semibold tracking-[-0.2px] text-[#464646]">流量趋势(PV)</div>
      </div>
    </section>
  );
}

const MARKS = [525, 1097].flatMap((y) => [668, 1332, 1996, 2660].map((x) => [x, y]));

export default function App() {
  return (
    <div className="relative flex h-[1566px] w-[2846px] overflow-hidden bg-[#eff1f5] font-['Inter','Noto_Sans_CJK_SC',sans-serif] text-[#262626]">
      <Sidebar />
      <div className="flex min-w-0 flex-1 flex-col">
        <Header />
        <div className="h-[196px] bg-white px-12 pt-[25px]">
          <div className="flex text-[28px] leading-[44px]">
            <span className="text-[#8c8c8c]">首页</span>
            <span className="mx-4 w-[9px] text-center text-[#8c8c8c]">/</span>
            <span>欢迎</span>
          </div>
          <h1 className="mt-[24px] text-[40px] leading-[64px] font-semibold">欢迎</h1>
        </div>
        <main className="flex flex-1 flex-col pt-12 pr-11 pl-12">
          <div className="flex h-40 items-center gap-10 rounded-[4px] bg-white px-12 text-[28px]">
            <div className="flex h-16 w-44 items-center justify-center rounded-[4px] border-2 border-[#d9d9d9] pt-[2px] shadow-[0_3px_0_rgba(0,0,0,0.015)]">菜单管理</div>
            <div className="flex h-16 w-[300px] items-center justify-between rounded-[4px] border-2 border-[#d9d9d9] pr-[19px] pl-[22px]">
              <span className="pt-[2px]">全部</span>
              <AiOutlineDown className="h-[26px] w-[26px] text-[#bfbfbf]" />
            </div>
          </div>
          <div className="mt-4 flex flex-1 gap-[18px]">
            <StatsCard />
            <section className="w-[1358px] shrink-0 rounded-[2px] bg-white px-12 pt-[33px]">
              <div className="text-[32px] leading-[50px] font-medium">地域分布情况</div>
              <div className="mt-[47px]">
                <RegionMap />
              </div>
            </section>
          </div>
        </main>
      </div>
      <div className="absolute top-[470px] right-0 flex h-24 w-[92px] items-center justify-center rounded-l-[8px] bg-[#2593fc] pl-1">
        <AiOutlineSetting className="h-11 w-11 text-white" />
      </div>
      {MARKS.map(([x, y]) => (
        <span
          key={x + "-" + y}
          className="pointer-events-none absolute w-[100px] -translate-x-1/2 -translate-y-1/2 -rotate-[22deg] text-center text-[32px] leading-[40px] text-[#1890ff]/18"
          style={{ left: x, top: y }}
        >
          金皮卡
        </span>
      ))}
    </div>
  );
}
